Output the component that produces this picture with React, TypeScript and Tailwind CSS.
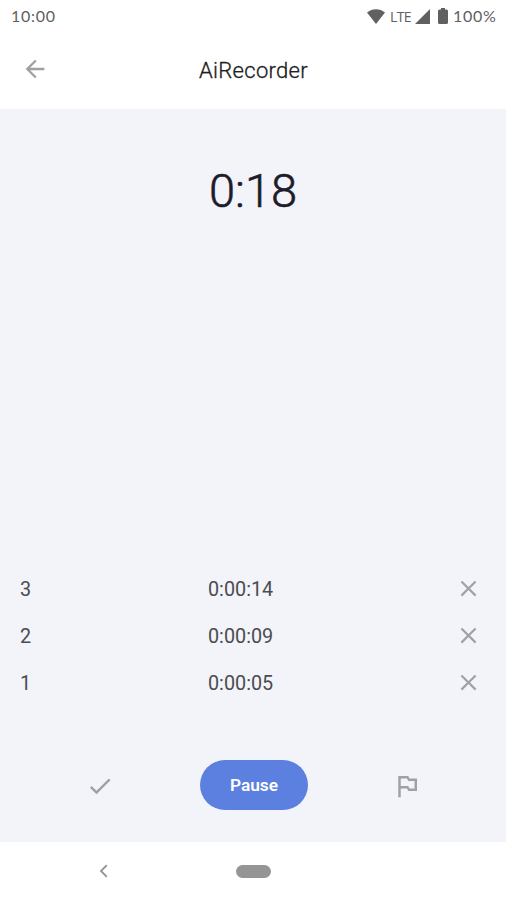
import React, { useState } from 'react';

interface Lap {
  id: number;
  time: string;
}

const initialLaps: Lap[] = [
  { id: 3, time: '0:00:14' },
  { id: 2, time: '0:00:09' },
  { id: 1, time: '0:00:05' }
];

interface IconProps {
  d: string;
  className?: string;
}

const Icon: React.FC<IconProps> = ({ d, className }) => (
  <svg viewBox="0 0 24 24" fill="currentColor" className={className}>
    <path d={d} />
  </svg>
);

const StatusBar: React.FC = () => (
  <div className="flex h-8 items-center justify-between pl-[11px] pr-[9px] font-['Lato',sans-serif] text-[16px] text-[#606060]">
    <span className="tracking-[0.75px]">10:00</span>
    <div className="flex items-center">
      <svg viewBox="0 0 18 15" className="h-[15px] w-[18px]" fill="currentColor">
        <path d="M0 3.6C5-1 13-1 18 3.6L9 15z" />
      </svg>
      <span className="ml-[5px] w-[22px] font-['Open_Sans',sans-serif] text-[14px] tracking-[-0.6px]">LTE</span>
      <svg viewBox="0 0 15 15" className="ml-[3px] h-[15px] w-[15px]" fill="currentColor">
        <path d="M15 0v15H0z" />
      </svg>
      <svg viewBox="0 0 10 16" className="ml-2 h-4 w-[10px]" fill="currentColor">
        <path d="M3 0h4v1.500h1.500q1.500 0 1.500 1.500v11.500q0 1.500-1.500 1.500h-7q-1.500 0-1.500-1.500V3q0-1.500 1.500-1.500H3z" />
      </svg>
      <span className="ml-[5px] w-[44px] tracking-[0.75px]">100%</span>
    </div>
  </div>
);

const App: React.FC = () => {
  const [laps, setLaps] = useState<Lap[]>(initialLaps);
  const [running, setRunning] = useState<boolean>(true);

  const removeLap = (id: number) => {
    setLaps(laps.filter((lap) => lap.id !== id));
  };

  return (
    <div className="flex h-[900px] w-[506px] flex-col bg-white font-['Roboto',sans-serif] text-[#1e1c2a]">
      <StatusBar />

      <header className="grid h-[77px] grid-cols-[1fr_auto_1fr] items-start pl-[21px] pr-[20px] pt-[23px]">
        <button className="h-7 w-7 text-[#a0a0a0]">
          <Icon className="h-7 w-7" d="M20 11H7.83l5.59-5.59L12 4l-8 8 8 8 1.41-1.41L7.83 13H20v-2z" />
        </button>
        <h1 className="text-[22px] font-light leading-[32px] tracking-[0.3px] text-[#202020] [-webkit-text-stroke:0.3px]">
          AiRecorder
        </h1>
      </header>

      <main className="flex h-[733px] flex-col bg-[#f2f4f9]">
        <div className="pt-[54px] text-center text-[47px] font-light leading-[56px] [-webkit-text-stroke:0.6px]">0:18</div>

        <ul className="mt-auto">
          {laps.map((lap) => (
            <li key={lap.id} className="flex h-[47px] items-center pl-5 pr-6 text-[19.8px] text-[#4c4c50]">
              <span className="w-[188px] pt-[3px]">{lap.id}</span>
              <span className="flex-1 pt-[3px]">{lap.time}</span>
              <button onClick={() => removeLap(lap.id)} className="text-[#a0a1a5]">
                <Icon
                  className="h-[27px] w-[27px]"
                  d="M19 6.41L17.59 5 12 10.59 6.41 5 5 6.41 10.59 12 5 17.59 6.41 19 12 13.41 17.59 19 19 17.59 13.41 12z"
                />
              </button>
            </li>
          ))}
        </ul>

        {/* Recording controls */}
        <div className="mb-8 mt-[54px] flex h-[50px] items-center pl-[86px] text-[#a0a1a3]">
          <button className="pt-px">
            <Icon className="h-7 w-7" d="M9 16.17L4.83 12l-1.42 1.41L9 19 21 7l-1.41-1.41z" />
          </button>
          <button
            onClick={() => setRunning(!running)}
            className="ml-[86px] h-[50px] w-[108px] rounded-full bg-[#5b80df] pt-0.5 text-[17.3px] font-semibold text-white"
          >
            {running ? 'Pause' : 'Resume'}
          </button>
          <button className="ml-[84px] pt-0.5">
            <Icon className="h-[30px] w-[30px]" d="M14 6l-1-2H5v17h2v-7h5l1 2h7V6h-6zm4 8h-4l-1-2H7V6h5l1 2h5v6z" />
          </button>
        </div>
      </main>

      {/* System navigation */}
      <nav className="flex h-[58px] items-center pl-[99px]">
        <svg viewBox="0 0 9 14" className="h-[14px] w-[9px] text-[#939393]" fill="none" stroke="currentColor" strokeWidth="1.8">
          <path d="M7.800 1.200L2 7l5.800 5.800" />
        </svg>
        <div className="ml-32 h-[13px] w-[35px] rounded-full bg-[#959595]" />
      </nav>
    </div>
  );
};

export default App;
